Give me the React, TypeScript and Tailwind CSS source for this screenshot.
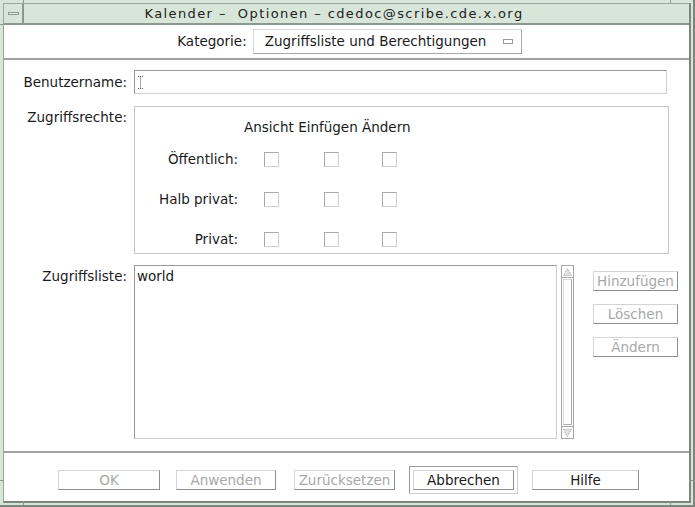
import React from "react";

const Btn = ({ label, w, disabled }: { label: string; w: string; disabled?: boolean }) => (
  <div
    className={`${w} h-[20px] flex items-center justify-center bg-white border border-t-[#d4d4d4] border-l-[#d4d4d4] border-r-[#8e8e8e] border-b-[#8e8e8e] ${
      disabled ? "text-[#a8a8a8]" : "text-[#1a1a1a]"
    }`}
  >
    {label}
  </div>
);

const Check = () => (
  <div className="w-[15px] h-[15px] bg-white border border-t-[#a9a9a9] border-l-[#a9a9a9] border-r-[#cfcfcf] border-b-[#cfcfcf]" />
);

const Row = ({ label }: { label: string }) => (
  <div className="flex items-center h-[40px]">
    <div className="w-[103px] text-right">{label}</div>
    <div className="ml-[26px]">
      <Check />
    </div>
    <div className="ml-[45px]">
      <Check />
    </div>
    <div className="ml-[43px]">
      <Check />
    </div>
  </div>
);

export default function App() {
  return (
    <div className="relative w-[695px] h-[507px] bg-[#d7e6d9] font-['DejaVu_Sans',sans-serif] text-[13.5px] text-[#1a1a1a] pt-[3px] pl-[3px] pr-[2px] pb-[2px] border-r-2 border-b-2 border-[#7b877d] overflow-hidden">
      {/* resize handle ticks */}
      <div className="absolute left-[23px] top-0 w-[1px] h-[3px] bg-[#8c988e]" />
      <div className="absolute right-[22px] top-0 w-[1px] h-[3px] bg-[#8c988e]" />
      <div className="absolute left-[23px] bottom-0 w-[1px] h-[4px] bg-[#8c988e]" />
      <div className="absolute right-[22px] bottom-0 w-[1px] h-[4px] bg-[#8c988e]" />
      <div className="absolute left-0 top-[24px] w-[3px] h-[1px] bg-[#8c988e]" />
      <div className="absolute left-0 bottom-[24px] w-[3px] h-[1px] bg-[#8c988e]" />
      <div className="absolute right-0 bottom-[24px] w-[4px] h-[1px] bg-[#8c988e]" />

      <div className="h-full flex flex-col border-l border-t border-[#9aa69c] border-r-2 border-b-2 border-r-[#7b877d] border-b-[#7b877d]">
        {/* title bar */}
        <div className="h-[21px] flex border-b-2 border-[#8c988e]">
          <div className="w-[20px] flex items-center justify-center border-r-2 border-[#8c988e]">
            <div className="w-[11px] h-[3px] border border-[#8c988e] bg-[#e8f1ea]" />
          </div>
          <div className="flex-1 flex items-center justify-center pr-[45px] text-[13px] tracking-[1.4px] text-[#222]">
            Kalender –&nbsp; Optionen – cdedoc@scribe.cde.x.org
          </div>
        </div>

        {/* body */}
        <div className="flex-1 flex flex-col bg-white">
          {/* Kategorie */}
          <div className="h-[35px] flex items-center justify-center gap-[6px] pl-[6px] border-b-2 border-[#a0a0a0]">
            <span>Kategorie:</span>
            <div className="w-[269px] h-[25px] flex items-center pl-[11px] pr-[8px] border border-t-[#d8d8d8] border-l-[#d8d8d8] border-r-[#a8a8a8] border-b-[#a8a8a8]">
              <span className="flex-1">Zugriffsliste und Berechtigungen</span>
              <div className="w-[10px] h-[5px] border border-[#9a9a9a]" />
            </div>
          </div>

          {/* form */}
          <div className="flex-1 flex flex-col pt-[10px]">
            <div className="flex items-center">
              <div className="w-[123px] text-right">Benutzername:</div>
              <div className="ml-[7px] w-[533px] h-[24px] flex items-center pl-[3px] border border-t-[#9a9a9a] border-l-[#9a9a9a] border-r-[#d0d0d0] border-b-[#d0d0d0]">
                <svg width="5" height="13" viewBox="0 0 5 13">
                  <path d="M0 0.5H5M2.5 0.5V12.5M0 12.5H5" stroke="#555" strokeWidth="1" strokeDasharray="1 1" fill="none" />
                </svg>
              </div>
            </div>

            <div className="flex mt-[12px]">
              <div className="w-[123px] text-right pt-[1px]">Zugriffsrechte:</div>
              <div className="ml-[7px] w-[535px] h-[148px] border border-[#c6c6c6] pt-[10px]">
                <div className="pl-[109px]">Ansicht Einfügen Ändern</div>
                <div className="mt-[2px]">
                  <Row label="Öffentlich:" />
                  <Row label="Halb privat:" />
                  <Row label="Privat:" />
                </div>
              </div>
            </div>

            <div className="flex mt-[11px]">
              <div className="w-[123px] text-right pt-[1px]">Zugriffsliste:</div>
              <div className="ml-[7px] w-[423px] h-[174px] border border-t-[#9a9a9a] border-l-[#9a9a9a] border-r-[#cfcfcf] border-b-[#cfcfcf] pl-[2px] pt-[1px] leading-[18px]">
                world
              </div>
              <div className="ml-[4px] w-[13px] h-[174px] flex flex-col border border-[#a8a8a8] bg-white">
                <div className="h-[12px] flex items-center justify-center border-b border-[#a8a8a8]">
                  <svg width="9" height="8" viewBox="0 0 9 8">
                    <path d="M4.5 0.5L8.5 7.5H0.5Z" fill="#e2e2e2" stroke="#a6a6a6" strokeDasharray="1 1" />
                  </svg>
                </div>
                <div className="flex-1 m-[1px] border border-t-[#d8d8d8] border-l-[#d8d8d8] border-r-[#a8a8a8] border-b-[#a8a8a8]" />
                <div className="h-[12px] flex items-center justify-center border-t border-[#a8a8a8]">
                  <svg width="9" height="8" viewBox="0 0 9 8">
                    <path d="M0.5 0.5H8.5L4.5 7.5Z" fill="#e2e2e2" stroke="#a6a6a6" strokeDasharray="1 1" />
                  </svg>
                </div>
              </div>
              <div className="ml-[19px] pt-[6px] flex flex-col gap-[13px]">
                <Btn label="Hinzufügen" w="w-[85px]" disabled />
                <Btn label="Löschen" w="w-[85px]" disabled />
                <Btn label="Ändern" w="w-[85px]" disabled />
              </div>
            </div>
          </div>

          {/* buttons */}
          <div className="h-[50px] border-t-2 border-[#a0a0a0] flex items-start pt-[17px] pl-[54px]">
            <Btn label="OK" w="w-[102px]" disabled />
            <div className="ml-[16px]">
              <Btn label="Anwenden" w="w-[100px]" disabled />
            </div>
            <div className="ml-[18px]">
              <Btn label="Zurücksetzen" w="w-[101px]" disabled />
            </div>
            <div className="ml-[14px] -mt-[4px] p-[3px] border border-t-[#9a9a9a] border-l-[#9a9a9a] border-r-[#d0d0d0] border-b-[#d0d0d0]">
              <Btn label="Abbrechen" w="w-[101px]" />
            </div>
            <div className="ml-[14px]">
              <Btn label="Hilfe" w="w-[107px]" />
            </div>
          </div>
        </div>
      </div>
    </div>
  );
}
